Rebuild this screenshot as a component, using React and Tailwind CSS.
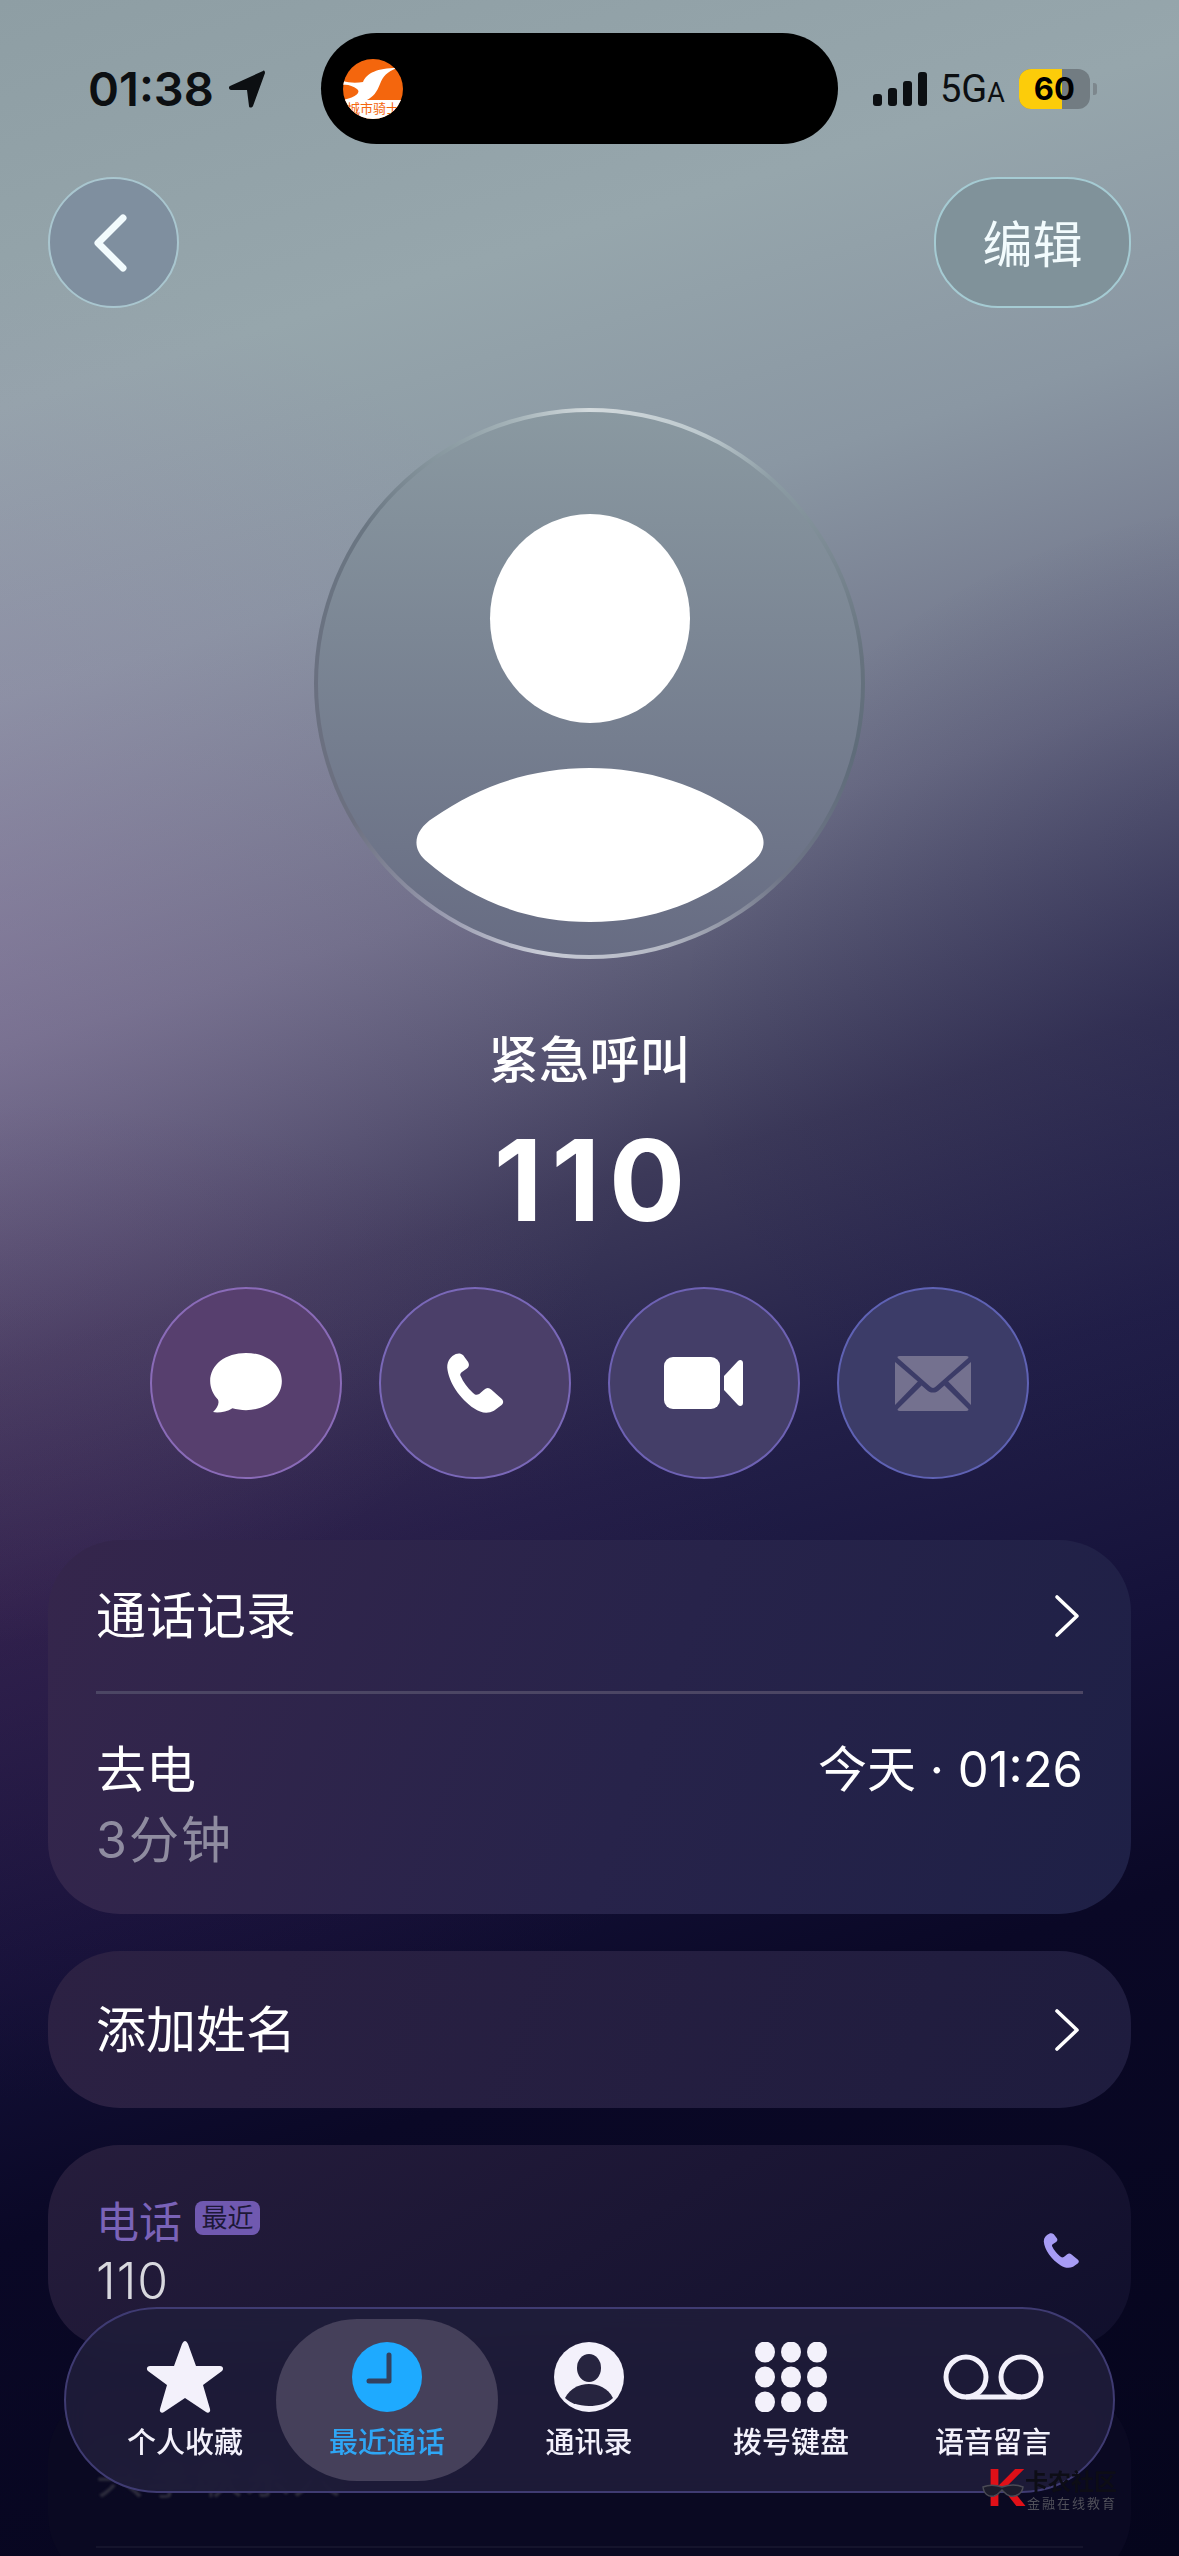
import React from 'react';

const cjk = "font-['Inter','Noto_Sans_CJK_SC',sans-serif]";

const Chevron = () => (
  <svg className="mr-[3px]" width="26" height="44" viewBox="0 0 26 44" fill="none" stroke="white" strokeWidth="3.6" strokeLinecap="round" strokeLinejoin="round">
    <path d="M3 3 L23 22 L3 41" />
  </svg>
);

const PhoneGlyph = ({ w, h, color }) => (
  <svg width={w} height={h} viewBox="4 2 48 54" fill={color} preserveAspectRatio="none">
    <path d="M12 3 C8 5 5 9 5 15 C6 28 15 43 27 52 C32 56 38 57 43 54 L49 49 C51 47 51 45 49 43 L41 35 C39 33 37 33 35 35 L31 39 C29 40 28 40 26 38 C21 33 18 28 16 23 C15 21 16 20 17 19 L21 16 C23 14 23 12 22 10 L18 4 C16 2 14 2 12 3 Z" />
  </svg>
);

const actions = [
  {
    key: 'msg',
    cls: 'bg-[#573f6e] border-[#8a6bb8]',
    icon: (
      <svg width="74" height="62" viewBox="0 0 76 64" fill="white">
        <path d="M38 1 C59 1 75 13 75 30 C75 47 59 60 38 60 C33 60 28 59 24 58 C18 62 9 63 4 62 C8 58 11 53 9 49 C4 44 1 37 1 30 C1 13 17 1 38 1 Z" />
      </svg>
    ),
  },
  {
    key: 'call',
    cls: 'bg-[#4b3f69] border-[#7a68b8]',
    icon: <PhoneGlyph w={59} h={60} color="white" />,
  },
  {
    key: 'video',
    cls: 'bg-[#443e68] border-[#6e62b4]',
    icon: (
      <svg width="80" height="54" viewBox="0 0 80 54" fill="white">
        <rect x="0" y="1" width="56" height="52" rx="9" />
        <path d="M60 20 L74 5 C76 3 79 4 79 7 L79 47 C79 50 76 51 74 49 L60 34 Z" />
      </svg>
    ),
  },
  {
    key: 'mail',
    cls: 'bg-[#3c3c68] border-[#5f62b4]',
    icon: (
      <svg width="76" height="55" viewBox="0 0 80 56" fill="#74718f" preserveAspectRatio="none">
        <path d="M5 0 H75 C77 0 78 1 77 2 L43 31 C41 33 39 33 37 31 L3 2 C2 1 3 0 5 0 Z" />
        <path d="M0 6 L24 26 L0 50 Z" />
        <path d="M80 6 L56 26 L80 50 Z" />
        <path d="M28 30 L34 35 C38 38 42 38 46 35 L52 30 L77 54 C78 55 77 56 75 56 H5 C3 56 2 55 3 54 Z" />
      </svg>
    ),
  },
];

const tabs = [
  {
    label: '个人收藏',
    color: 'text-[#f3f1fb]',
    icon: (
      <svg width="78" height="74" viewBox="0 0 78 74" fill="#f3f1fb">
        <path d="M39 1 C40 1 41 2 42 4 L50 26 L74 26 C77 26 78 29 76 31 L57 45 L64 69 C65 72 62 74 60 72 L39 58 L18 72 C16 74 13 72 14 69 L21 45 L2 31 C0 29 1 26 4 26 L28 26 L36 4 C37 2 38 1 39 1 Z" />
      </svg>
    ),
  },
  {
    label: '最近通话',
    color: 'text-[#2ea6f5]',
    icon: (
      <svg width="70" height="70" viewBox="0 0 70 70">
        <circle cx="35" cy="35" r="35" fill="#1eaaff" />
        <path d="M37 13 V39 H17" fill="none" stroke="#33415f" strokeWidth="5" strokeLinejoin="round" strokeLinecap="round" />
      </svg>
    ),
  },
  {
    label: '通讯录',
    color: 'text-[#f3f1fb]',
    icon: (
      <svg width="70" height="70" viewBox="0 0 70 70">
        <circle cx="35" cy="35" r="35" fill="#f3f1fb" />
        <ellipse cx="35" cy="26" rx="12" ry="14" fill="#26243f" />
        <path d="M11 56 C16 46 26 42 35 42 C44 42 54 46 59 56 C53 62 44 64 35 64 C26 64 17 62 11 56 Z" fill="#26243f" />
      </svg>
    ),
  },
  {
    label: '拨号键盘',
    color: 'text-[#f3f1fb]',
    icon: (
      <svg width="72" height="70" viewBox="0 0 72 70" fill="#f3f1fb">
        {[10, 35, 60].map((cy) =>
          [10, 36, 62].map((cx) => <ellipse key={`${cx}-${cy}`} cx={cx} cy={cy} rx="10" ry="10.5" />)
        )}
      </svg>
    ),
  },
  {
    label: '语音留言',
    color: 'text-[#f3f1fb]',
    icon: (
      <svg width="103" height="46" viewBox="0 0 103 46" fill="none" stroke="#f3f1fb" strokeWidth="5">
        <circle cx="24" cy="23" r="20" />
        <circle cx="79" cy="23" r="20" />
        <path d="M24 43 H79" />
      </svg>
    ),
  },
];

const App = () => {
  return (
    <div className={`relative h-[2556px] w-[1179px] overflow-hidden bg-[radial-gradient(ellipse_760px_700px_at_-80px_950px,rgba(150,120,170,0.38),transparent),radial-gradient(ellipse_800px_500px_at_0px_1600px,rgba(70,30,80,0.36),transparent),radial-gradient(ellipse_620px_520px_at_1300px_1020px,rgba(25,25,70,0.42),transparent),linear-gradient(163deg,#8e9ea4_0%,#96a6ac_14%,#8a97a3_24%,#6c6e86_36%,#3c3959_47%,#221f48_57%,#15123a_67%,#0a0826_77%,#05051c_100%)] ${cjk}`}>
      {/* status bar */}
      <div className="flex h-[144px] items-start pt-[33px]">
        <div className="flex h-[111px] w-[321px] items-center gap-[15px] pl-[88px]">
          <span className="text-[47px] leading-none font-semibold text-[#0c0f12]">01:38</span>
          <svg width="36" height="38" viewBox="0 0 36 38" fill="#0c0f12">
            <path d="M34 1 C35 0 36 1 36 3 L24 36 C23 38 20 38 20 36 L18 20 L2 20 C0 20 -1 17 1 16 Z" />
          </svg>
        </div>
        <div className="flex h-[111px] w-[517px] items-center rounded-[56px] bg-black pl-[22px]">
          <div className="relative h-[60px] w-[60px] overflow-hidden rounded-full bg-[#f4660d]">
            <svg className="absolute inset-0" width="60" height="60" viewBox="0 0 60 60" fill="white">
              <path d="M0 22 C6 24 14 24 20 23 C24 14 34 9 54 9 C44 13 40 17 37 25 C34 33 30 38 24 41 L0 41 C14 38 18 33 14 30 C10 27 4 25 0 26 Z" />
              <path d="M0 41 H60 V60 H0 Z" />
            </svg>
            <span className="absolute bottom-[4px] left-0 w-full text-center text-[13px] leading-none whitespace-nowrap text-[#f4660d]">城市骑士</span>
          </div>
        </div>
        <div className="flex h-[111px] flex-1 items-center pl-[35px]">
          <div className="flex items-end gap-[6px]">
            <div className="h-[12px] w-[9px] rounded-[3px] bg-[#0c0f12]" />
            <div className="h-[18px] w-[9px] rounded-[3px] bg-[#0c0f12]" />
            <div className="h-[25px] w-[9px] rounded-[3px] bg-[#0c0f12]" />
            <div className="h-[34px] w-[9px] rounded-[3px] bg-[#0c0f12]" />
          </div>
          <span className="ml-[13px] font-['Roboto',sans-serif] text-[38px] leading-none text-[#0c0f12]">5G<span className="text-[27px]">A</span></span>
          <div className="ml-[14px] flex items-center gap-[3px]">
            <div className="relative flex h-[40px] w-[71px] items-center justify-center overflow-hidden rounded-[12px] bg-[#727c82]">
              <div className="absolute inset-y-0 left-0 w-[43px] bg-[#fccc0a]" />
              <span className="relative text-[31px] leading-none font-bold text-black">60</span>
            </div>
            <div className="h-[12px] w-[4px] rounded-r-[3px] bg-[#7d878d]" />
          </div>
        </div>
      </div>

      {/* nav */}
      <div className="mt-[33px] flex items-center justify-between px-[48px]">
        <div className="flex h-[131px] w-[131px] items-center justify-center rounded-full border-2 border-[#a9c6cf] bg-[#7f8f9f] pr-[8px]">
          <svg width="34" height="58" viewBox="0 0 34 58" fill="none" stroke="#f2fbfd" strokeWidth="7" strokeLinecap="round" strokeLinejoin="round">
            <path d="M30 4 L5 29 L30 54" />
          </svg>
        </div>
        <div className="flex h-[131px] w-[197px] items-center justify-center rounded-[64px] border-2 border-[#a5cbd3] bg-[#80929a] pt-[4px] text-[50px] leading-none text-[#f2fbfd]">
          编辑
        </div>
      </div>

      {/* avatar */}
      <div className="mt-[100px] ml-[314px] h-[551px] w-[551px] rounded-full bg-[conic-gradient(#d3dadd_0deg,#bcc8cd_25deg,#8c9ca4_42deg,#66727e_85deg,#5f6c7a_105deg,#6e7486_135deg,#b4b8c4_165deg,#c8cbd6_190deg,#9a9cb0_212deg,#6c7080_240deg,#6a7080_270deg,#6a7682_305deg,#8d9da4_330deg,#a8b6bb_345deg,#d3dadd_360deg)] p-[4px]">
        <div className="flex h-full w-full flex-col items-center rounded-full bg-[linear-gradient(180deg,#8a99a1,#676c83)] pt-[102px]">
          <div className="h-[209px] w-[200px] rounded-[50%] bg-white" />
          <svg className="mt-[45px] overflow-visible" width="350" height="154" viewBox="0 0 348 154" fill="white" preserveAspectRatio="none">
            <path d="M18 50 C65 17 117 0 174 0 C231 0 283 17 330 50 C347 61 353 78 338 92 C290 134 235 154 174 154 C113 154 58 134 10 92 C-5 78 1 61 18 50 Z" />
          </svg>
        </div>
      </div>

      {/* name */}
      <div className="mt-[68px] text-center text-[50px] leading-[66px] font-medium tracking-[0.5px] text-white">紧急呼叫</div>
      <div className="mt-[20px] pl-[9px] text-center text-[113px] leading-[134px] font-bold tracking-[9px] text-white">110</div>

      {/* actions */}
      <div className="mt-[40px] flex justify-center gap-[37px]">
        {actions.map((a) => (
          <div key={a.key} className={`flex h-[192px] w-[192px] items-center justify-center rounded-full border-[2.5px] ${a.cls}`}>
            {a.icon}
          </div>
        ))}
      </div>

      {/* cards */}
      <div className="mt-[61px] flex flex-col gap-[37px] px-[48px]">
        <div className="h-[374px] rounded-[72px] bg-[linear-gradient(110deg,#35264c,#27234a_55%,#1e2046)] px-[48px] text-white">
          <div className="flex h-[154px] items-center justify-between border-b-[3px] border-[#4c4664]">
            <span className="text-[50px] leading-none">通话记录</span>
            <Chevron />
          </div>
          <div className="flex justify-between pt-[51px]">
            <span className="text-[50px] leading-none">去电</span>
            <span className="text-[49px] leading-none">今天 · 01:26</span>
          </div>
          <div className="mt-[20px] text-[50px] leading-none tracking-[2px] text-[#8f8ca0]">3分钟</div>
        </div>
        <div className="flex h-[157px] items-center justify-between rounded-[72px] bg-[linear-gradient(110deg,#2c2143,#1e1c3e)] px-[48px] text-white">
          <span className="text-[50px] leading-none">添加姓名</span>
          <Chevron />
        </div>
        <div className="flex h-[205px] justify-between rounded-[72px] bg-[linear-gradient(150deg,#261d3c,#100f2c)] pr-[51px] pl-[48px] pt-[56px]">
          <div>
            <div className="flex items-start gap-[13px]">
              <span className="text-[43px] leading-none text-[#7a63b8]">电话</span>
              <span className="flex h-[34px] w-[65px] items-center justify-center rounded-[8px] bg-[#7059b0] text-[26px] leading-none text-[#1d1838]">最近</span>
            </div>
            <div className="mt-[12px] text-[50px] leading-none font-light tracking-[1px] text-[#d8d8de]">110</div>
          </div>
          <div className="mt-[32px]">
            <PhoneGlyph w={37} h={35} color="#a79cf5" />
          </div>
        </div>
        <div className="h-[200px] rounded-[72px] bg-[#0a0922] px-[48px] text-[49px] leading-none text-[#2c2b3c]">
          <div className="h-[161px] border-b-2 border-[#15142c] pt-[64px]">
            <span className="blur-[1px]">共享联系人</span>
          </div>
        </div>
      </div>

      {/* tab bar, floats over the cards */}
      <div className="absolute top-[2307px] left-[64px] flex h-[186px] w-[1051px] items-center rounded-[93px] border-2 border-[#3f3b72] bg-[#1f1d3a]/90 px-[18px] backdrop-blur-md">
        {tabs.map((t, i) => (
          <div
            key={t.label}
            className={`flex h-[162px] flex-col items-center gap-[14px] rounded-[81px] pt-[21px] ${i === 1 ? '-mx-[10px] w-[222px] bg-[#45405a]' : 'w-[202px]'}`}
          >
            <div className="flex h-[74px] items-center">{t.icon}</div>
            <span className={`text-[29px] leading-none font-medium ${t.color}`}>{t.label}</span>
          </div>
        ))}
      </div>

      {/* watermark */}
      <div className="absolute top-[2468px] left-[987px] flex items-start gap-[4px]">
        <div className="relative h-[39px] w-[34px]">
          <span className="font-['Liberation_Sans',sans-serif] text-[54px] leading-[39px] font-bold text-[#e01018]">K</span>
          <svg className="absolute top-[14px] -left-[5px]" width="42" height="16" viewBox="0 0 42 16" fill="#1c1c2c" stroke="#4a4a55" strokeWidth="1.5">
            <path d="M1 5 C8 2 14 3 20 5 C26 3 34 2 41 5 C40 12 34 15 28 14 C24 13 22 10 20 8 C18 10 16 13 12 14 C6 15 2 12 1 5 Z" />
          </svg>
        </div>
        <div className="flex flex-col pt-[3px]">
          <span className="text-[23px] leading-none font-bold text-[#0d0d16]">卡农社区</span>
          <span className="mt-[3px] ml-[2px] text-[13px] leading-none tracking-[2px] whitespace-nowrap text-[#50505a]">金融在线教育</span>
        </div>
      </div>
    </div>
  );
};

export default App;
